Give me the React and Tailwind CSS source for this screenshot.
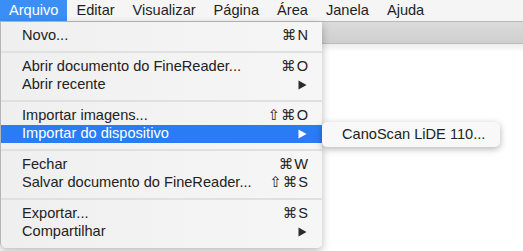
import React from "react";

const menuBar = ["Arquivo", "Editar", "Visualizar", "Página", "Área", "Janela", "Ajuda"];

const groups = [
  [{ label: "Novo...", key: "⌘N" }],
  [
    { label: "Abrir documento do FineReader...", key: "⌘O" },
    { label: "Abrir recente", arrow: true },
  ],
  [
    { label: "Importar imagens...", key: "⇧⌘O" },
    { label: "Importar do dispositivo", arrow: true, active: true },
  ],
  [
    { label: "Fechar", key: "⌘W" },
    { label: "Salvar documento do FineReader...", key: "⇧⌘S" },
  ],
  [
    { label: "Exportar...", key: "⌘S" },
    { label: "Compartilhar", arrow: true },
  ],
];

const Arrow = ({ white }) => (
  <svg width="9" height="10" viewBox="0 0 9 10" className="mr-[2px]">
    <path d="M0.5 0.5 L8.5 5 L0.5 9.5 Z" fill={white ? "#ffffff" : "#2b2b2b"} />
  </svg>
);

const App = () => {
  return (
    <div className="relative w-[523px] h-[251px] overflow-hidden bg-white font-['Liberation_Sans','DejaVu_Sans',sans-serif] text-[14.6px] text-[#222]">
      {/* Menu bar */}
      <div className="flex h-[22px] items-stretch bg-[#f5f5f5] border-b border-[#b9b9b9]">
        {menuBar.map((m, i) => (
          <div
            key={m}
            className={
              i === 0
                ? "flex items-center px-[9px] bg-[#3b8ef5] text-white"
                : "flex items-center px-[9px] text-[#1e1e1e]"
            }
          >
            {m}
          </div>
        ))}
      </div>

      {/* Window toolbar behind */}
      <div className="h-[22px] bg-gradient-to-b from-[#dcdbdc] to-[#d0cfd0] border-b border-[#bdbdbd]" />
      <div className="h-[8px] bg-gradient-to-b from-[#ececec] to-white" />

      {/* Dropdown menu */}
      <div className="absolute left-0 top-[22px] w-[322px] h-[226px] pt-[5px] pb-[6px] bg-gradient-to-r from-[#efefef] via-[#f3f3f3] to-[#f6f6f6] border-l border-[#b5b5b5] rounded-b-[5px] shadow-[0_3px_8px_rgba(0,0,0,0.28)]">
        {groups.map((g, gi) => (
          <div key={gi}>
            {gi > 0 && (
              <div className="h-[13px] flex items-center">
                <div className="h-[2px] w-full bg-[#e0e0e0]" />
              </div>
            )}
            {g.map((it) => (
              <div
                key={it.label}
                className={
                  it.active
                    ? "flex h-[18px] items-center justify-between pl-[21px] pr-[13px] bg-[#2a7cf5] text-white"
                    : "flex h-[18px] items-center justify-between pl-[21px] pr-[13px]"
                }
              >
                <span>{it.label}</span>
                {it.key && <span className="tracking-[1px]">{it.key}</span>}
                {it.arrow && <Arrow white={it.active} />}
              </div>
            ))}
          </div>
        ))}
      </div>

      {/* Submenu */}
      <div className="absolute left-[322px] top-[122px] w-[178px] h-[25px] flex items-center pl-[20px] bg-[#f8f8f8] rounded-[5px] shadow-[0_2px_7px_rgba(0,0,0,0.3)]">
        CanoScan LiDE 110...
      </div>
    </div>
  );
};

export default App;
